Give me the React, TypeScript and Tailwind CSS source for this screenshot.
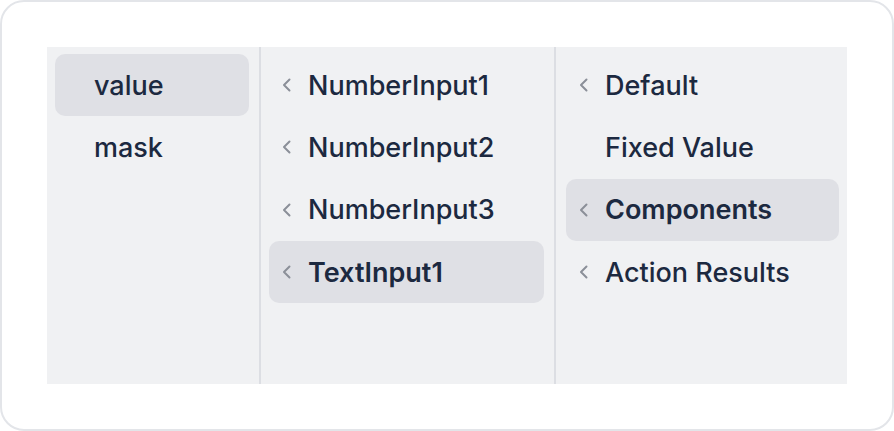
import React from "react";

type Item = { label: string; chevron: boolean; active?: boolean };

const Chevron = () => (
  <svg width="12" height="16" viewBox="0 0 12 16" fill="none" stroke="#8b8f98" strokeWidth="2" strokeLinecap="round" strokeLinejoin="round" className="shrink-0">
    <path d="M8.5 2.5L3 8l5.5 5.5" />
  </svg>
);

function Row({ item }: { item: Item }) {
  return (
    <div
      className={`flex items-center h-[62.33px] rounded-[10px] pl-[12px] ${item.active ? "bg-[#dfe0e5]" : ""}`}
    >
      <div className="w-[27px] flex items-center">{item.chevron ? <Chevron /> : null}</div>
      <span className={`text-[27px] leading-none text-[#1c2940] ${item.active && item.chevron ? "font-semibold" : "font-medium"}`}>
        {item.label}
      </span>
    </div>
  );
}

export default function App() {
  const col1: Item[] = [
    { label: "value", chevron: false, active: true },
    { label: "mask", chevron: false },
  ];
  const col2: Item[] = [
    { label: "NumberInput1", chevron: true },
    { label: "NumberInput2", chevron: true },
    { label: "NumberInput3", chevron: true },
    { label: "TextInput1", chevron: true, active: true },
  ];
  const col3: Item[] = [
    { label: "Default", chevron: true },
    { label: "Fixed Value", chevron: false },
    { label: "Components", chevron: true, active: true },
    { label: "Action Results", chevron: true },
  ];
  return (
    <div className="w-[894px] h-[431px] bg-white" style={{ fontFamily: "Inter, 'Noto Sans', sans-serif" }}>
      <div className="w-[894px] h-[431px] border-2 border-[#e3e5e9] rounded-[24px] p-[45px] pb-0">
        <div className="flex h-[337px] bg-[#f0f1f3]">
          <div className="w-[214px] border-r-2 border-[#dcdee3] pl-2 pr-[10px] pt-[7px]">
            {col1.map((it) => (
              <Row key={it.label} item={it} />
            ))}
          </div>
          <div className="w-[295px] border-r-2 border-[#dcdee3] pl-2 pr-[10px] pt-[7px]">
            {col2.map((it) => (
              <Row key={it.label} item={it} />
            ))}
          </div>
          <div className="flex-1 pl-[10px] pr-2 pt-[7px]">
            {col3.map((it) => (
              <Row key={it.label} item={it} />
            ))}
          </div>
        </div>
      </div>
    </div>
  );
}
